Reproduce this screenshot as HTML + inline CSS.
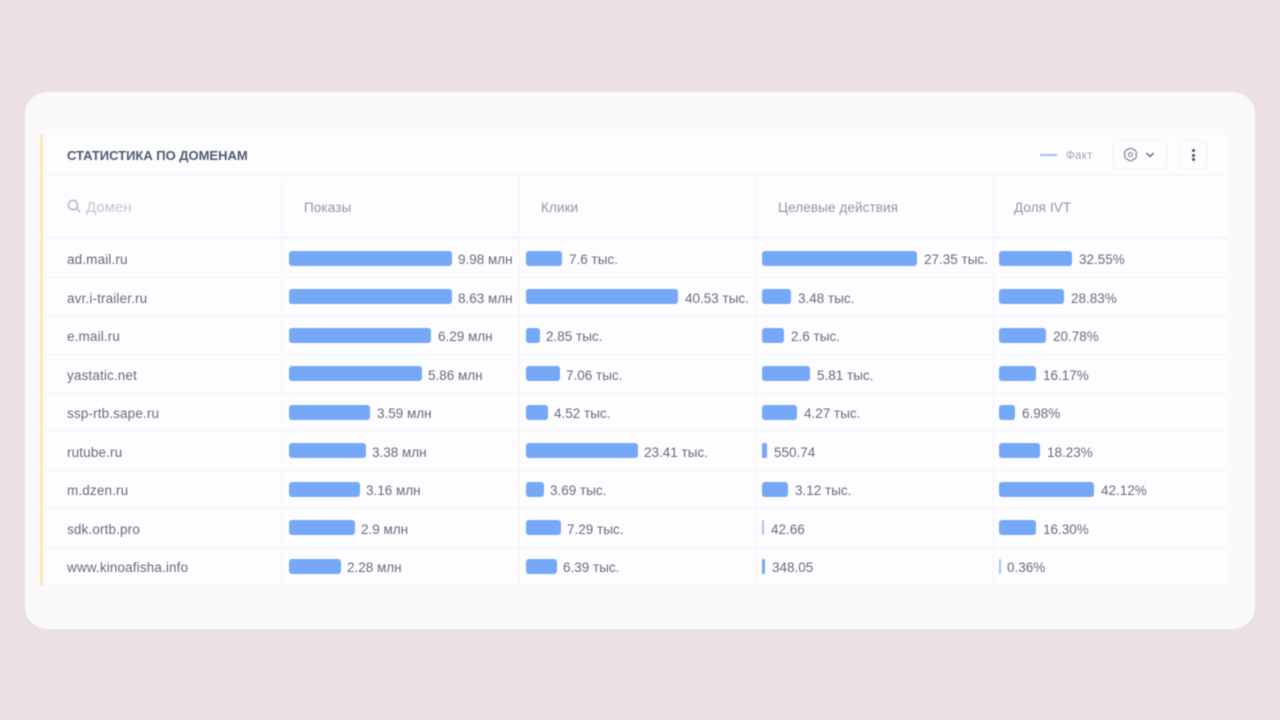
<!DOCTYPE html>
<html lang="ru"><head><meta charset="utf-8"><title>Статистика по доменам</title>
<style>
html,body{margin:0;padding:0}
body{width:1280px;height:720px;background:#ebe1e3;overflow:hidden;position:relative;font-family:"Liberation Sans",sans-serif}
#s{position:absolute;left:0;top:0;width:1280px;height:720px;filter:blur(.45px)}
.a{position:absolute}
.t{position:absolute;white-space:nowrap;font-size:13.5px;line-height:16px;letter-spacing:0;color:#646c7c;margin-top:1px}
.d{letter-spacing:.14px}
.b{position:absolute;height:15px;background:#75a8f7;border-radius:3px;margin-left:-.5px}
.l{position:absolute;background:#f4f5f9}
.h{position:absolute;white-space:nowrap;font-size:13.5px;line-height:16px;letter-spacing:.1px;color:#8f96a3;margin-top:1px}
</style></head><body><div id="s">
<div class="a" style="left:25px;top:92px;width:1230px;height:537px;background:#fbfafa;border-radius:22px"></div>
<div class="a" style="left:40px;top:134px;width:3px;height:452px;background:#f8eab8"></div>
<div class="a" style="left:46px;top:135px;width:1183px;height:451px;background:#fdfdff;border-radius:9px 9px 0 0"></div>

<div class="t" style="left:67px;top:148px;margin-top:0;font-size:13px;font-weight:bold;letter-spacing:-.02px;color:#505a70">СТАТИСТИКА ПО ДОМЕНАМ</div>
<div class="a" style="left:1040px;top:154px;width:17px;height:2px;background:#a3bfee"></div>
<div class="t" style="left:1066px;top:148px;margin-top:0;font-size:11.5px;letter-spacing:.3px;color:#a2a8b4">Факт</div>
<div class="a" style="left:1112px;top:140px;width:54px;height:28px;border:1px solid #f4f4f8;border-radius:9px;background:#fdfdff"></div>
<svg class="a" style="left:1123px;top:147px" width="15" height="15" viewBox="0 0 24 24" fill="none" stroke="#7f8794" stroke-width="1.8" stroke-linejoin="round"><path d="M8.58 2.6A10 10 0 0 1 15.42 2.6Q15.5 5.94 18.43 4.34A10 10 0 0 1 21.85 10.26Q19 12 21.85 13.74A10 10 0 0 1 18.43 19.66Q15.5 18.06 15.42 21.4A10 10 0 0 1 8.58 21.4Q8.5 18.06 5.57 19.66A10 10 0 0 1 2.15 13.74Q5 12 2.15 10.26A10 10 0 0 1 5.57 4.34Q8.5 5.94 8.58 2.6z"/><circle cx="12" cy="12" r="3.2"/></svg>
<svg class="a" style="left:1145px;top:151px" width="10" height="8" viewBox="0 0 10 8" fill="none" stroke="#5c6574" stroke-width="1.4"><path d="M1.500 2l3.500 3.500L8.500 2"/></svg>
<div class="a" style="left:1179px;top:140px;width:27px;height:28px;border:1px solid #f4f4f8;border-radius:9px;background:#fdfdff"></div>
<div class="a" style="left:1192px;top:149px;width:3px;height:3px;border-radius:50%;background:#434c60"></div>
<div class="a" style="left:1192px;top:153.5px;width:3px;height:3px;border-radius:50%;background:#434c60"></div>
<div class="a" style="left:1192px;top:158px;width:3px;height:3px;border-radius:50%;background:#434c60"></div>

<div class="l" style="left:46px;top:175px;width:1183px;height:1px"></div>
<div class="l" style="left:46px;top:237px;width:1183px;height:2px;background:#f1f2f8"></div>
<div class="l" style="left:46px;top:277px;width:1183px;height:1px"></div>
<div class="l" style="left:46px;top:316px;width:1183px;height:1px"></div>
<div class="l" style="left:46px;top:354px;width:1183px;height:1px"></div>
<div class="l" style="left:46px;top:393px;width:1183px;height:1px"></div>
<div class="l" style="left:46px;top:431px;width:1183px;height:1px"></div>
<div class="l" style="left:46px;top:470px;width:1183px;height:1px"></div>
<div class="l" style="left:46px;top:508px;width:1183px;height:1px"></div>
<div class="l" style="left:46px;top:547px;width:1183px;height:1px"></div>
<div class="l" style="left:46px;top:585px;width:1183px;height:1px"></div>
<div class="l" style="left:282px;top:175px;width:1px;height:411px"></div>
<div class="l" style="left:519px;top:175px;width:1px;height:411px"></div>
<div class="l" style="left:756px;top:175px;width:1px;height:411px"></div>
<div class="l" style="left:993px;top:175px;width:1px;height:411px"></div>

<svg class="a" style="left:67px;top:199px" width="14" height="14" viewBox="0 0 14 14" fill="none" stroke="#b9bec6" stroke-width="1.7"><circle cx="6" cy="6" r="4.6"/><path d="M9.500 9.500L13 13"/></svg>
<div class="h" style="left:86px;top:199px;font-size:15px;letter-spacing:0;color:#c3c7ce">Домен</div>
<div class="h" style="left:304px;top:199px">Показы</div>
<div class="h" style="left:541px;top:199px">Клики</div>
<div class="h" style="left:778px;top:199px">Целевые действия</div>
<div class="h" style="left:1014px;top:199px">Доля IVT</div>

<div class="t d" style="left:67px;top:251px">ad.mail.ru</div>
<div class="t d" style="left:67px;top:290px">avr.i-trailer.ru</div>
<div class="t d" style="left:67px;top:328px">e.mail.ru</div>
<div class="t d" style="left:67px;top:367px">yastatic.net</div>
<div class="t d" style="left:67px;top:405px">ssp-rtb.sape.ru</div>
<div class="t d" style="left:67px;top:444px">rutube.ru</div>
<div class="t d" style="left:67px;top:482px">m.dzen.ru</div>
<div class="t d" style="left:67px;top:521px">sdk.ortb.pro</div>
<div class="t d" style="left:67px;top:559px">www.kinoafisha.info</div>

<div class="b" style="left:289px;top:251px;width:163px"></div><div class="t" style="left:458px;top:251px">9.98 млн</div>
<div class="b" style="left:289px;top:289px;width:163px"></div><div class="t" style="left:458px;top:290px">8.63 млн</div>
<div class="b" style="left:289px;top:328px;width:142px"></div><div class="t" style="left:438px;top:328px">6.29 млн</div>
<div class="b" style="left:289px;top:366px;width:133px"></div><div class="t" style="left:428px;top:367px">5.86 млн</div>
<div class="b" style="left:289px;top:405px;width:81px"></div><div class="t" style="left:377px;top:405px">3.59 млн</div>
<div class="b" style="left:289px;top:443px;width:77px"></div><div class="t" style="left:372px;top:444px">3.38 млн</div>
<div class="b" style="left:289px;top:482px;width:71px"></div><div class="t" style="left:366px;top:482px">3.16 млн</div>
<div class="b" style="left:289px;top:520px;width:66px"></div><div class="t" style="left:361px;top:521px">2.9 млн</div>
<div class="b" style="left:289px;top:559px;width:52px"></div><div class="t" style="left:347px;top:559px">2.28 млн</div>

<div class="b" style="left:526px;top:251px;width:36.5px"></div><div class="t" style="left:569px;top:251px">7.6 тыс.</div>
<div class="b" style="left:526px;top:289px;width:152px"></div><div class="t" style="left:685px;top:290px">40.53 тыс.</div>
<div class="b" style="left:526px;top:328px;width:14px"></div><div class="t" style="left:546px;top:328px">2.85 тыс.</div>
<div class="b" style="left:526px;top:366px;width:34px"></div><div class="t" style="left:566px;top:367px">7.06 тыс.</div>
<div class="b" style="left:526px;top:405px;width:22px"></div><div class="t" style="left:554px;top:405px">4.52 тыс.</div>
<div class="b" style="left:526px;top:443px;width:112px"></div><div class="t" style="left:644px;top:444px">23.41 тыс.</div>
<div class="b" style="left:526px;top:482px;width:18px"></div><div class="t" style="left:550px;top:482px">3.69 тыс.</div>
<div class="b" style="left:526px;top:520px;width:35px"></div><div class="t" style="left:567px;top:521px">7.29 тыс.</div>
<div class="b" style="left:526px;top:559px;width:31px"></div><div class="t" style="left:563px;top:559px">6.39 тыс.</div>

<div class="b" style="left:762.5px;top:251px;width:154.5px"></div><div class="t" style="left:924px;top:251px">27.35 тыс.</div>
<div class="b" style="left:762.5px;top:289px;width:29px"></div><div class="t" style="left:798px;top:290px">3.48 тыс.</div>
<div class="b" style="left:762.5px;top:328px;width:22px"></div><div class="t" style="left:791px;top:328px">2.6 тыс.</div>
<div class="b" style="left:762.5px;top:366px;width:48px"></div><div class="t" style="left:817px;top:367px">5.81 тыс.</div>
<div class="b" style="left:762.5px;top:405px;width:35px"></div><div class="t" style="left:804px;top:405px">4.27 тыс.</div>
<div class="b" style="left:762.5px;top:443px;width:5px;border-radius:1.5px"></div><div class="t" style="left:774px;top:444px">550.74</div>
<div class="b" style="left:762.5px;top:482px;width:26px"></div><div class="t" style="left:795px;top:482px">3.12 тыс.</div>
<div class="b" style="left:762.5px;top:520px;width:1.5px;border-radius:1px;background:#a3c4f5"></div><div class="t" style="left:771px;top:521px">42.66</div>
<div class="b" style="left:762.5px;top:559px;width:3px;border-radius:1px"></div><div class="t" style="left:772px;top:559px">348.05</div>

<div class="b" style="left:999.5px;top:251px;width:73px"></div><div class="t" style="left:1079px;top:251px">32.55%</div>
<div class="b" style="left:999.5px;top:289px;width:65px"></div><div class="t" style="left:1071px;top:290px">28.83%</div>
<div class="b" style="left:999.5px;top:328px;width:47px"></div><div class="t" style="left:1053px;top:328px">20.78%</div>
<div class="b" style="left:999.5px;top:366px;width:36.5px"></div><div class="t" style="left:1043px;top:367px">16.17%</div>
<div class="b" style="left:999.5px;top:405px;width:16px"></div><div class="t" style="left:1022px;top:405px">6.98%</div>
<div class="b" style="left:999.5px;top:443px;width:41px"></div><div class="t" style="left:1047px;top:444px">18.23%</div>
<div class="b" style="left:999.5px;top:482px;width:95px"></div><div class="t" style="left:1101px;top:482px">42.12%</div>
<div class="b" style="left:999.5px;top:520px;width:37px"></div><div class="t" style="left:1043px;top:521px">16.30%</div>
<div class="b" style="left:999.5px;top:559px;width:1.5px;border-radius:1px;background:#a3c4f5"></div><div class="t" style="left:1007px;top:559px">0.36%</div>
</div></body></html>
